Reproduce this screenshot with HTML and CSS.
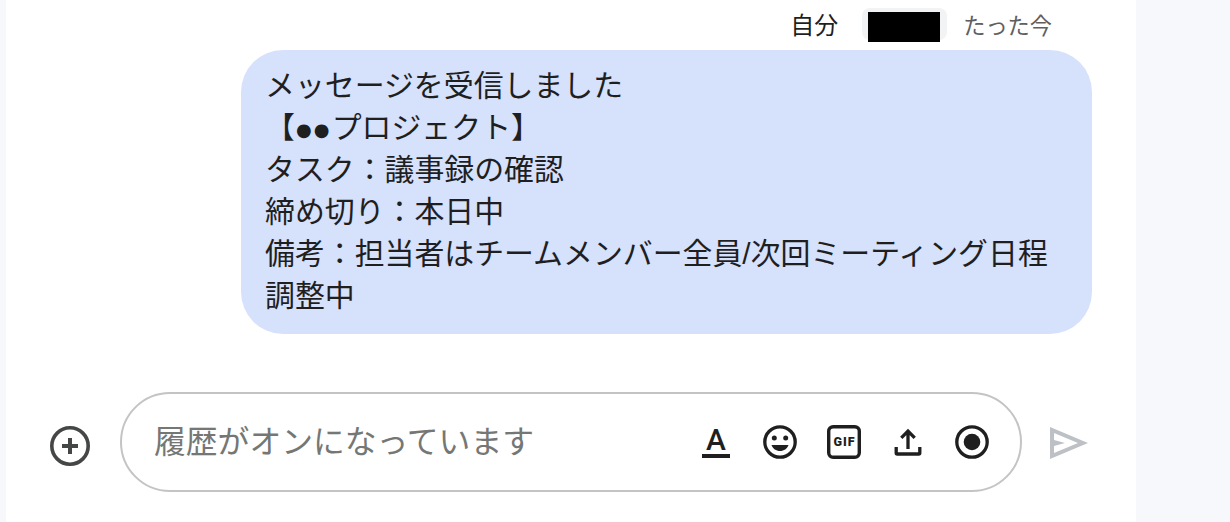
FILE: index.html
```html
<!DOCTYPE html>
<html lang="ja">
<head>
    <meta charset="UTF-8">
    <meta name="viewport" content="width=device-width, initial-scale=1.0">
    <title>チャット</title>
    <link rel="stylesheet" href="styles.css">
</head>
<body>
    <div class="chat">
        <div class="message-header">
            <span class="sender">自分</span>
            <span class="badge"><span class="redacted"></span></span>
            <span class="time">たった今</span>
        </div>

        <div class="message">
            <p>メッセージを受信しました</p>
            <p>【<span class="dots">●●</span>プロジェクト】</p>
            <p>タスク：議事録の確認</p>
            <p>締め切り：本日中</p>
            <p>備考：担当者はチームメンバー全員<span class="slash">/</span>次回ミーティング日程調整中</p>
        </div>

        <div class="composer">
            <svg class="add-icon" viewBox="0 0 40 40">
                <circle cx="20" cy="20" r="18.2" fill="none" stroke="currentColor" stroke-width="3.6"/>
                <path d="M20 12v16M12 20h16" fill="none" stroke="currentColor" stroke-width="4"/>
            </svg>

            <div class="input-box">
                <span class="placeholder">履歴がオンになっています</span>
                <div class="tools">
                    <!-- format -->
                    <svg class="icon" viewBox="0 0 40 40">
                        <text class="format-label" x="20" y="28" text-anchor="middle">A</text>
                        <path d="M6 32h28v4H6z" fill="currentColor"/>
                    </svg>
                    <!-- emoji -->
                    <svg class="icon" viewBox="0 0 40 40">
                        <circle cx="20" cy="20" r="15.2" fill="none" stroke="currentColor" stroke-width="3.3"/>
                        <circle cx="14.3" cy="16" r="2.5" fill="currentColor"/>
                        <circle cx="25.7" cy="16" r="2.5" fill="currentColor"/>
                        <path d="M11.5 23h17c-1.2 3.8-4.6 6-8.500 6s-7.300-2.200-8.500-6z" fill="currentColor"/>
                    </svg>
                    <!-- gif -->
                    <svg class="icon" viewBox="0 0 40 40">
                        <rect x="4.7" y="4.7" width="30.6" height="30.6" rx="4.5" fill="none" stroke="currentColor" stroke-width="3.4"/>
                        <text class="gif-label" x="9.5" y="24" textLength="21">GIF</text>
                    </svg>
                    <!-- upload -->
                    <svg class="icon" viewBox="0 0 40 40">
                        <path d="M20 27V9M13.3 15.8L20 9l6.7 6.8M8.2 25v6q0 1 1 1h21.6q1 0 1-1v-6" fill="none" stroke="currentColor" stroke-width="3.3"/>
                    </svg>
                    <!-- record -->
                    <svg class="icon" viewBox="0 0 40 40">
                        <circle cx="20" cy="20" r="15.2" fill="none" stroke="currentColor" stroke-width="3.3"/>
                        <circle cx="20" cy="20" r="8.3" fill="currentColor"/>
                    </svg>
                </div>
            </div>

            <svg class="send-icon" viewBox="0 0 40 34">
                <path d="M1 1l38 16L1 33zM5 7v7l11 3-11 3v7l24-10z" fill="currentColor" fill-rule="evenodd"/>
            </svg>
        </div>
    </div>
</body>
</html>
```

FILE: styles.css
```css
* {
    margin: 0;
    padding: 0;
    box-sizing: border-box;
}

body {
    font-family: "Noto Sans CJK JP", sans-serif;
    background-color: #f6f8fc;
    height: 522px;
    padding: 0 94px 0 6px;
    overflow: hidden;
}

.chat {
    background: white;
    height: 522px;
}

.message-header {
    display: flex;
    justify-content: flex-end;
    height: 50px;
    padding: 8px 84px 0 0;
}

.sender {
    font-size: 24px;
    line-height: 32px;
    color: #1f1f1f;
}

.badge {
    background: #f1f3f4;
    border-radius: 8px;
    width: 85px;
    height: 32px;
    margin: 0 16px 0 24px;
    padding: 4px 6px 0;
}

.redacted {
    display: block;
    width: 72px;
    height: 30px;
    background: black;
}

.time {
    font-size: 22.2px;
    line-height: 32px;
    color: #5f5f5f;
}

.message {
    background: #d6e1fc;
    border-radius: 42px;
    width: 851px;
    height: 284px;
    margin-left: 235px;
    padding: 12px 24px;
    font-size: 29.9px;
    line-height: 42px;
    color: #1f1f1f;
}

.dots {
    font-family: "DejaVu Sans", sans-serif;
    font-size: 18px;
    letter-spacing: 2.2px;
    line-height: 1;
    vertical-align: 2px;
    margin-left: 1px;
}

.slash {
    font-family: "Liberation Sans", sans-serif;
    line-height: 1;
}

.composer {
    display: flex;
    align-items: center;
    margin-top: 58px;
    padding-left: 44px;
}

.add-icon {
    width: 40px;
    height: 40px;
    margin: 8px 30px 0 0;
    color: #444746;
}

.input-box {
    display: flex;
    align-items: center;
    justify-content: space-between;
    width: 902px;
    height: 100px;
    padding: 0 28px 0 32px;
    border: 2px solid #c4c4c4;
    border-radius: 50px;
}

.placeholder {
    font-size: 31.8px;
    line-height: 46px;
    padding-bottom: 6px;
    color: #757775;
}

.tools {
    display: flex;
    gap: 24px;
    color: #1f1f1f;
}

.icon {
    width: 40px;
    height: 40px;
}

.format-label {
    font-family: Roboto, sans-serif;
    font-size: 30px;
    font-weight: 500;
    fill: currentColor;
}

.gif-label {
    font-family: Roboto, sans-serif;
    font-size: 12.5px;
    font-weight: 900;
    fill: currentColor;
}

.send-icon {
    width: 40px;
    height: 34px;
    margin: 2px 0 0 27px;
    color: #bdc1c6;
}
```
